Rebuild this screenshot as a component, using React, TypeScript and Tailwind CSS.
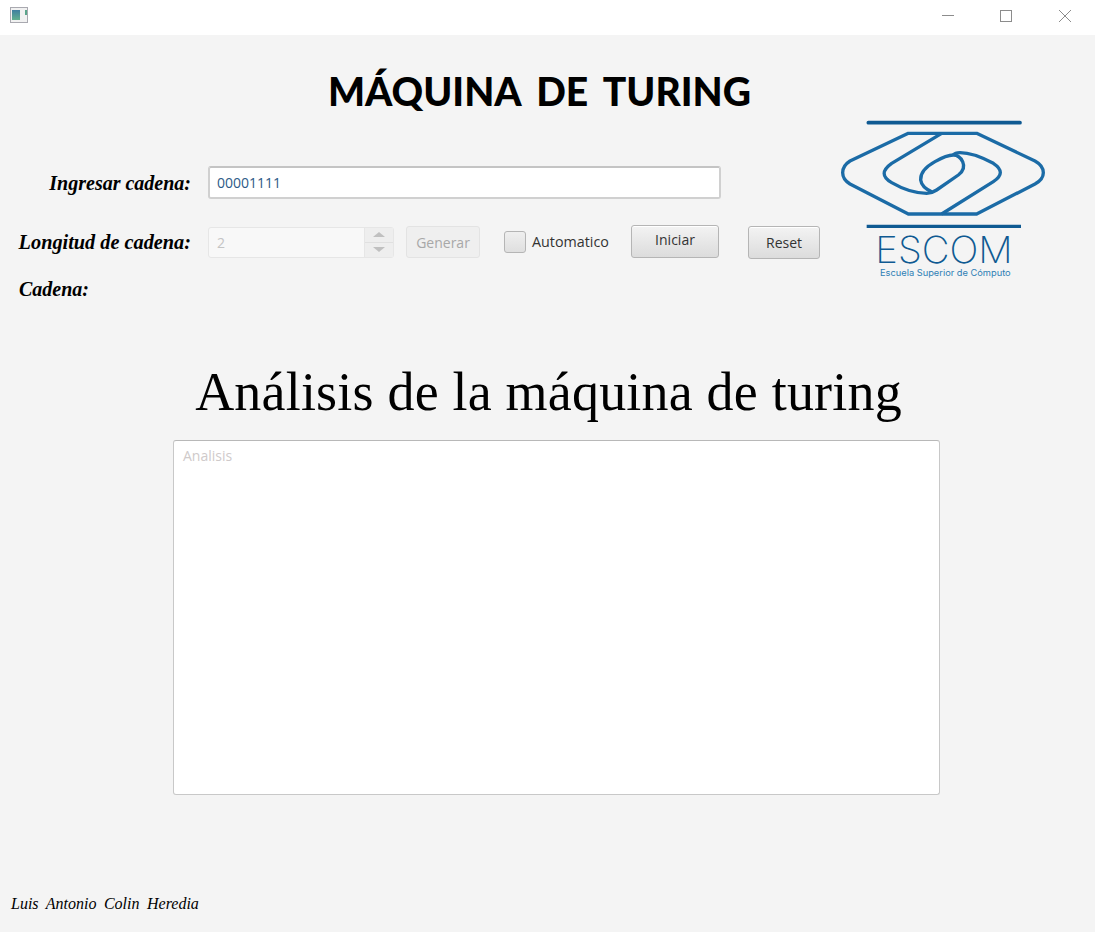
import React from 'react';

const scriptFont = "font-['Liberation_Serif',serif] italic font-bold text-black";
const uiFont = "font-['Open_Sans',sans-serif]";
const btn = "rounded-[3px] border border-[#b5b5b5] bg-linear-to-b from-[#f3f3f3] to-[#dcdcdc] text-[14px] text-[#333] shadow-[inset_0_1px_0_#fff] flex items-center justify-center";

function TitleBar() {
  return (
    <div className="h-[35px] bg-white flex items-center justify-between pl-[10px] shrink-0">
      <svg width="18" height="16" viewBox="0 0 18 16" className="mb-[5px]">
        <rect x="0.5" y="0.5" width="17" height="15" fill="#f1f1f1" stroke="#a9a9b0" />
        <defs>
          <linearGradient id="ico" x1="0" y1="0" x2="0" y2="1">
            <stop offset="0" stopColor="#3f7fa0" />
            <stop offset="1" stopColor="#62b08e" />
          </linearGradient>
        </defs>
        <rect x="2" y="3" width="8" height="10" fill="url(#ico)" />
        <rect x="15" y="3" width="2" height="5" fill="#5aa58a" />
      </svg>
      <div className="flex items-center h-full">
        <svg width="58" height="35" viewBox="0 0 58 35">
          <path d="M12 15.5H24" stroke="#8c8c8c" />
        </svg>
        <svg width="58" height="35" viewBox="0 0 58 35">
          <rect x="12.5" y="10.5" width="11" height="11" fill="none" stroke="#8c8c8c" />
        </svg>
        <svg width="49" height="35" viewBox="0 0 49 35">
          <path d="M13 10L25 22M25 10L13 22" stroke="#8c8c8c" />
        </svg>
      </div>
    </div>
  );
}

function Logo() {
  return (
    <svg width="250" height="190" viewBox="0 0 750 570" className="shrink-0">
      <path d="M145 68H600" stroke="#0f5a92" strokeWidth="11" strokeLinecap="round" />
      <path d="M140 379H603" stroke="#0f5a92" strokeWidth="10" />
      <g fill="none" stroke="#1b6ba6" strokeWidth="10" strokeLinejoin="round">
        <path d="M265 100H470L645 183Q670 197 670 218Q670 238 645 252L470 342H265L90 252Q68 238 68 218Q68 197 90 183Z" />
        <path d="M365 100L215 190Q170 222 215 248Q270 280 320 280Q335 280 350 270L415 225Q438 208 428 185Q418 165 400 165Q380 165 345 185Q300 210 302 240Q305 262 335 275" />
        <path d="M365 342L520 245Q562 218 520 190Q460 158 420 158Q405 158 400 165" />
      </g>
      <text x="166" y="490" fill="#0f5a92" fontSize="112" textLength="412" lengthAdjust="spacingAndGlyphs" fontWeight="250" fontFamily="Inter, sans-serif">ESCOM</text>
      <text x="180" y="527" fill="#2f7fb5" fontSize="27" textLength="392" lengthAdjust="spacingAndGlyphs" fontFamily="Inter, sans-serif">Escuela Superior de Cómputo</text>
    </svg>
  );
}

export default function App() {
  return (
    <div className={`w-[1095px] h-[932px] bg-[#f4f4f4] flex flex-col overflow-hidden ${uiFont}`}>
      <TitleBar />

      <div className="h-[65px] flex items-center pl-[328px] pt-[47px] shrink-0">
        <h1 className="font-['Lato',sans-serif] font-black text-[39px] leading-none text-black [word-spacing:6.5px] whitespace-nowrap">MÁQUINA DE TURING</h1>
      </div>

      <div className="flex items-start h-[190px] shrink-0">
        <div className="w-[820px] shrink-0 pt-[66px]">
          <div className="flex items-center">
            <label className={`w-[191px] text-right text-[20px] leading-none ${scriptFont}`}>Ingresar cadena:</label>
            <input
              readOnly
              value="00001111"
              className="ml-[17px] w-[513px] h-[33px] rounded-[3px] border-2 border-[#d0d0d0] border-t-[#c4c4c4] bg-white px-[7px] text-[14px] text-[#2c5a86] outline-none"
            />
          </div>

          <div className="flex items-center mt-[26px] h-[34px]">
            <label className={`w-[191px] text-right text-[20.3px] leading-none whitespace-nowrap ${scriptFont}`}>Longitud de cadena:</label>
            <div className="ml-[17px] w-[186px] h-[31px] rounded-[3px] border border-[#e6e6e6] bg-[#f8f8f8] flex">
              <span className="flex-1 px-[8px] text-[14px] leading-[29px] text-[#c4c4c4]">2</span>
              <div className="w-[29px] border-l border-[#e6e6e6] flex flex-col">
                <div className="flex-1 bg-[#eeeeee] flex items-center justify-center border-b border-[#e0e0e0]">
                  <div className="w-0 h-0 border-x-[6px] border-x-transparent border-b-[5px] border-b-[#c0c0c0]" />
                </div>
                <div className="flex-1 bg-[#eeeeee] flex items-center justify-center">
                  <div className="w-0 h-0 border-x-[6px] border-x-transparent border-t-[5px] border-t-[#c0c0c0]" />
                </div>
              </div>
            </div>
            <div className="ml-[12px] w-[74px] h-[32px] rounded-[3px] border border-[#e3e3e3] bg-[#efefef] text-[14px] text-[#a8a8a8] flex items-center justify-center">Generar</div>
            <div className="ml-[24px] w-[22px] h-[22px] rounded-[3px] border border-[#b5b5b5] bg-linear-to-b from-[#efefef] to-[#dfdfdf]" />
            <span className="ml-[6px] w-[99px] text-[14.3px] text-[#333]">Automatico</span>
            <div className={`w-[88px] h-[33px] mb-[2px] ${btn}`}><span className="mb-[3px]">Iniciar</span></div>
            <div className={`ml-[29px] w-[72px] h-[33px] ${btn}`}>Reset</div>
          </div>

          <div className={`mt-[20px] pl-[19px] text-[20px] leading-none ${scriptFont}`}>Cadena:</div>
        </div>
        <Logo />
      </div>

      <h2 className="mt-[70px] text-center pl-[2px] font-['Liberation_Serif',serif] text-[54px] leading-[64px] text-black tracking-[0.2px] whitespace-nowrap">Análisis de la máquina de turing</h2>

      <div className="mt-[16px] ml-[173px]">
        <textarea
          readOnly
          placeholder="Analisis"
          className="block w-[767px] h-[355px] resize-none rounded-[3px] border border-[#c8c8c8] border-t-[#b8b8b8] bg-white px-[9px] py-[4px] text-[14px] outline-none placeholder:text-[#cfcaca]"
        />
      </div>

      <div className="mt-[101px] pl-[11px] font-['Liberation_Serif',serif] italic text-[16px] leading-none text-black [word-spacing:3.5px]">Luis Antonio Colin Heredia</div>
    </div>
  );
}
